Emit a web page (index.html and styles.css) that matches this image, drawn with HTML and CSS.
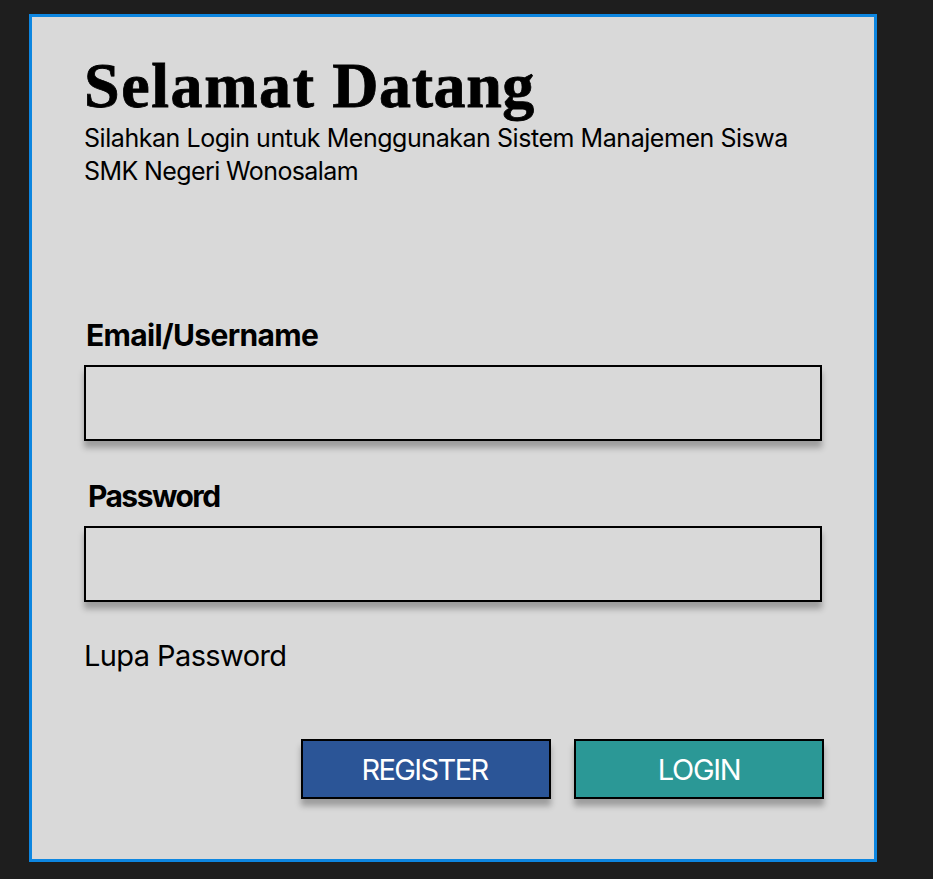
FILE: index.html
```html
<!DOCTYPE html>
<html lang="id">
<head>
<meta charset="utf-8">
<title>Login</title>
<link rel="stylesheet" href="styles.css">
</head>
<body>
<main class="card">
  <h1 class="title">Selamat <span class="title-second">Datang</span></h1>
  <p class="intro"><span class="intro-first">Silahkan Login untuk Menggunakan Sistem Manajemen Siswa</span><br><span class="intro-second">SMK Negeri Wonosalam</span></p>
  <form class="form">
    <label class="label label-user" for="user">Email/Username</label>
    <input class="field" id="user" type="text">
    <label class="label label-pass" for="pass">Password</label>
    <input class="field" id="pass" type="password">
    <a class="forgot">Lupa Password</a>
    <div class="actions">
      <button class="button register" type="button"><span>REGISTER</span></button>
      <button class="button login" type="button"><span>LOGIN</span></button>
    </div>
  </form>
</main>
</body>
</html>
```
FILE: styles.css
```css
* { box-sizing: border-box; }
body {
  margin: 0;
  height: 879px;
  padding: 14px 0 0 29px;
  overflow: hidden;
  background: #1e1e1e;
  color: #000;
  font-family: Inter, "Liberation Sans", sans-serif;
}
.card {
  width: 848px;
  height: 848px;
  padding: 35px 50px 0 52px;
  border: 3px solid #0d86e0;
  background: #d9d9d9;
}
.title {
  margin: 0;
  height: 70px;
  font: bold 64px/68px "Liberation Serif", serif;
  letter-spacing: 1.6px;
  word-spacing: -1px;
  white-space: nowrap;
  -webkit-text-stroke: 0.8px #000;
}
.title-second { letter-spacing: 0.6px; }
.intro {
  margin: 0;
  height: 66px;
  font-size: 25px;
  line-height: 33px;
  white-space: nowrap;
}
.intro-first { letter-spacing: -0.45px; }
.intro-second { letter-spacing: -0.6px; }
.form {
  display: flex;
  flex-direction: column;
  align-items: flex-start;
  margin-top: 128px;
}
.label {
  height: 49px;
  padding-left: 2px;
  font-size: 30px;
  font-weight: 650;
  line-height: 39px;
  letter-spacing: -0.65px;
}
.label-pass {
  margin-top: 36px;
  padding-left: 4px;
  letter-spacing: -1.55px;
}
.field {
  width: 738px;
  height: 76px;
  padding: 0 16px;
  border: 2px solid #000;
  border-radius: 0;
  background: #d9d9d9;
  font: inherit;
  font-size: 28px;
  box-shadow: 0 7px 6px rgba(0, 0, 0, .28);
}
.forgot {
  margin-top: 34px;
  font-size: 29px;
  font-weight: 400;
  line-height: 40px;
  letter-spacing: -0.6px;
}
.actions {
  display: flex;
  gap: 23px;
  margin: 63px 0 0 217px;
}
.button {
  width: 250px;
  height: 60px;
  padding: 2px 3px 0 0;
  border: 2px solid #000;
  color: #fff;
  font: 400 29px/36px Inter, "Liberation Sans", sans-serif;
  letter-spacing: -1.6px;
  box-shadow: 0 7px 6px rgba(0, 0, 0, .28);
}
.register { background: #2b5597; }
.login {
  padding-right: 0;
  background: #2b9896;
  letter-spacing: -1.3px;
}
```
